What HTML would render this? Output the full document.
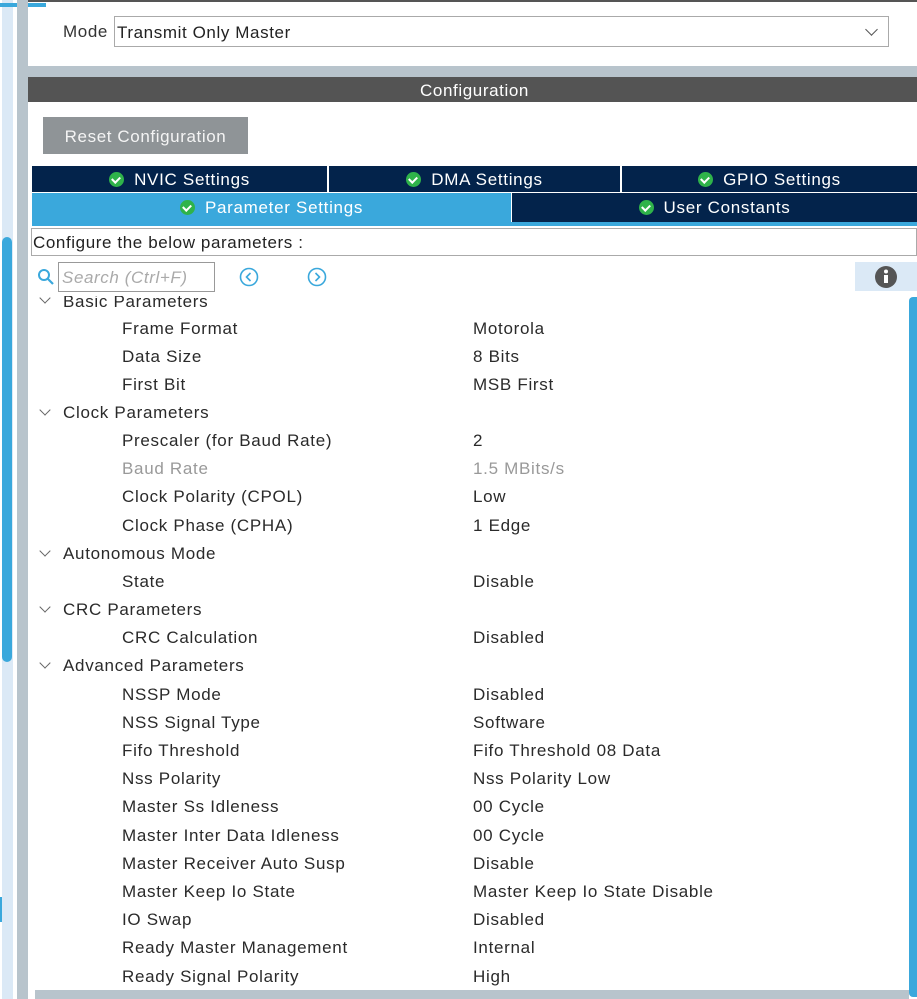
<!DOCTYPE html>
<html><head><meta charset="utf-8"><style>
*{margin:0;padding:0;box-sizing:border-box}
body{width:917px;height:999px;overflow:hidden;background:#fff;font-family:"Liberation Sans",sans-serif;position:relative;color:#222;letter-spacing:0.6px}
.a{position:absolute}
.row{position:absolute;font-size:17px;color:#2a2a2a;height:28px;line-height:28px;letter-spacing:0.7px}
.tab{position:absolute;color:#fff;font-size:17px;text-align:center;line-height:28px;letter-spacing:0.7px}
.ck{display:inline-block;width:15px;height:15px;border-radius:50%;background:#2fb34a;vertical-align:-2px;margin-right:10px;position:relative}
.ck:after{content:"";position:absolute;left:4px;top:3px;width:4px;height:6px;border:solid #fff;border-width:0 2px 2px 0;transform:rotate(45deg)}
.chev{position:absolute;left:41px;width:8px;height:8px;border:solid #666;border-width:0 1.5px 1.5px 0;transform:rotate(45deg)}
</style></head><body>
<div class="a" style="left:2px;top:0;width:11px;height:999px;background:#dbe9f6"></div>
<div class="a" style="left:0;top:3px;width:46px;height:4px;background:#3aa8dc"></div>
<div class="a" style="left:2px;top:237px;width:10px;height:425px;background:#3aa8dc;border-radius:5px"></div>
<div class="a" style="left:0;top:897px;width:2px;height:25px;background:#3aa8dc"></div>
<div class="a" style="left:17px;top:0;width:11px;height:999px;background:#b8c4cc"></div>
<div class="a" style="left:28px;top:0;width:889px;height:2px;background:#555"></div>
<div class="a" style="left:63px;top:22px;font-size:17px;color:#333">Mode</div>
<div class="a" style="left:114px;top:16px;width:775px;height:31px;border:1px solid #aaa;font-size:17px;padding:6px 2px;color:#222">Transmit Only Master</div>
<div class="a" style="left:867px;top:25px;width:9px;height:9px;border:solid #555;border-width:0 1.5px 1.5px 0;transform:rotate(45deg)"></div>
<div class="a" style="left:28px;top:66px;width:889px;height:11px;background:#b8c4cc"></div>
<div class="a" style="left:28px;top:77px;width:889px;height:25px;background:#545454;color:#fff;font-size:17px;text-align:center;line-height:27px;padding-left:4px">Configuration</div>
<div class="a" style="left:43px;top:117px;width:205px;height:37px;background:#8f9497;color:#f4f4f4;font-size:17px;text-align:center;line-height:39px">Reset Configuration</div>
<div class="tab" style="left:32px;top:166px;width:295px;height:26px;background:#03234b"><span class="ck"></span>NVIC Settings</div>
<div class="tab" style="left:329px;top:166px;width:291px;height:26px;background:#03234b"><span class="ck"></span>DMA Settings</div>
<div class="tab" style="left:622px;top:166px;width:295px;height:26px;background:#03234b"><span class="ck"></span>GPIO Settings</div>
<div class="tab" style="left:32px;top:193px;width:479px;height:29px;background:#3aa8dc;line-height:29px"><span class="ck"></span>Parameter Settings</div>
<div class="tab" style="left:512px;top:193px;width:405px;height:29px;background:#03234b;line-height:29px"><span class="ck"></span>User Constants</div>
<div class="a" style="left:32px;top:222px;width:885px;height:4px;background:#3aa8dc"></div>
<div class="a" style="left:31px;top:228px;width:886px;height:28px;border:1px solid #aaa;font-size:17px;line-height:28px;padding-left:1px;color:#222">Configure the below parameters :</div>
<svg class="a" style="left:37px;top:268px" width="18" height="18" viewBox="0 0 18 18"><circle cx="7" cy="7" r="5" fill="none" stroke="#3aa8dc" stroke-width="2"/><path d="M11 11l5 5" stroke="#3aa8dc" stroke-width="2.2"/></svg>
<div class="a" style="left:58px;top:262px;width:157px;height:30px;border:1px solid #999;font-size:17px;font-style:italic;color:#aaa;padding:5px 3px">Search (Ctrl+F)</div>
<svg class="a" style="left:239px;top:267px" width="20" height="20"><circle cx="10" cy="10" r="8.5" fill="none" stroke="#3aa8dc" stroke-width="1.6"/><path d="M11.5 6l-4 4 4 4" fill="none" stroke="#3aa8dc" stroke-width="1.6"/></svg>
<svg class="a" style="left:307px;top:267px" width="20" height="20"><circle cx="10" cy="10" r="8.5" fill="none" stroke="#3aa8dc" stroke-width="1.6"/><path d="M8.5 6l4 4-4 4" fill="none" stroke="#3aa8dc" stroke-width="1.6"/></svg>
<div class="a" style="left:855px;top:262px;width:62px;height:29px;background:#dbe9f6"></div>
<svg class="a" style="left:874px;top:265px" width="24" height="24"><circle cx="12" cy="12" r="11" fill="#555"/><rect x="10" y="10" width="4" height="8" fill="#fff"/><circle cx="12" cy="6.5" r="2" fill="#fff"/></svg>
<div class="a" style="left:909px;top:297px;width:8px;height:700px;background:#3aa8dc;border-radius:4px 0 0 4px"></div>
<div class="a" style="left:35px;top:990px;width:874px;height:9px;background:#b8c4cc"></div>
<div class="a" style="left:28px;top:296px;width:880px;height:694px;overflow:hidden">
<div style="position:relative;left:-28px;top:-296px">
<div class="chev" style="top:294px"></div><div class="row" style="left:63px;top:288px">Basic Parameters</div>
<div class="row" style="left:122px;top:315px">Frame Format</div><div class="row" style="left:473px;top:315px">Motorola</div>
<div class="row" style="left:122px;top:343px">Data Size</div><div class="row" style="left:473px;top:343px">8 Bits</div>
<div class="row" style="left:122px;top:371px">First Bit</div><div class="row" style="left:473px;top:371px">MSB First</div>
<div class="chev" style="top:406px"></div><div class="row" style="left:63px;top:399px">Clock Parameters</div>
<div class="row" style="left:122px;top:427px">Prescaler (for Baud Rate)</div><div class="row" style="left:473px;top:427px">2</div>
<div class="row" style="left:122px;top:455px;color:#999">Baud Rate</div><div class="row" style="left:473px;top:455px;color:#999">1.5 MBits/s</div>
<div class="row" style="left:122px;top:483px">Clock Polarity (CPOL)</div><div class="row" style="left:473px;top:483px">Low</div>
<div class="row" style="left:122px;top:512px">Clock Phase (CPHA)</div><div class="row" style="left:473px;top:512px">1 Edge</div>
<div class="chev" style="top:547px"></div><div class="row" style="left:63px;top:540px">Autonomous Mode</div>
<div class="row" style="left:122px;top:568px">State</div><div class="row" style="left:473px;top:568px">Disable</div>
<div class="chev" style="top:603px"></div><div class="row" style="left:63px;top:596px">CRC Parameters</div>
<div class="row" style="left:122px;top:624px">CRC Calculation</div><div class="row" style="left:473px;top:624px">Disabled</div>
<div class="chev" style="top:659px"></div><div class="row" style="left:63px;top:652px">Advanced Parameters</div>
<div class="row" style="left:122px;top:681px">NSSP Mode</div><div class="row" style="left:473px;top:681px">Disabled</div>
<div class="row" style="left:122px;top:709px">NSS Signal Type</div><div class="row" style="left:473px;top:709px">Software</div>
<div class="row" style="left:122px;top:737px">Fifo Threshold</div><div class="row" style="left:473px;top:737px">Fifo Threshold 08 Data</div>
<div class="row" style="left:122px;top:765px">Nss Polarity</div><div class="row" style="left:473px;top:765px">Nss Polarity Low</div>
<div class="row" style="left:122px;top:793px">Master Ss Idleness</div><div class="row" style="left:473px;top:793px">00 Cycle</div>
<div class="row" style="left:122px;top:822px">Master Inter Data Idleness</div><div class="row" style="left:473px;top:822px">00 Cycle</div>
<div class="row" style="left:122px;top:850px">Master Receiver Auto Susp</div><div class="row" style="left:473px;top:850px">Disable</div>
<div class="row" style="left:122px;top:878px">Master Keep Io State</div><div class="row" style="left:473px;top:878px">Master Keep Io State Disable</div>
<div class="row" style="left:122px;top:906px">IO Swap</div><div class="row" style="left:473px;top:906px">Disabled</div>
<div class="row" style="left:122px;top:934px">Ready Master Management</div><div class="row" style="left:473px;top:934px">Internal</div>
<div class="row" style="left:122px;top:963px">Ready Signal Polarity</div><div class="row" style="left:473px;top:963px">High</div>
</div></div>
</body></html>
